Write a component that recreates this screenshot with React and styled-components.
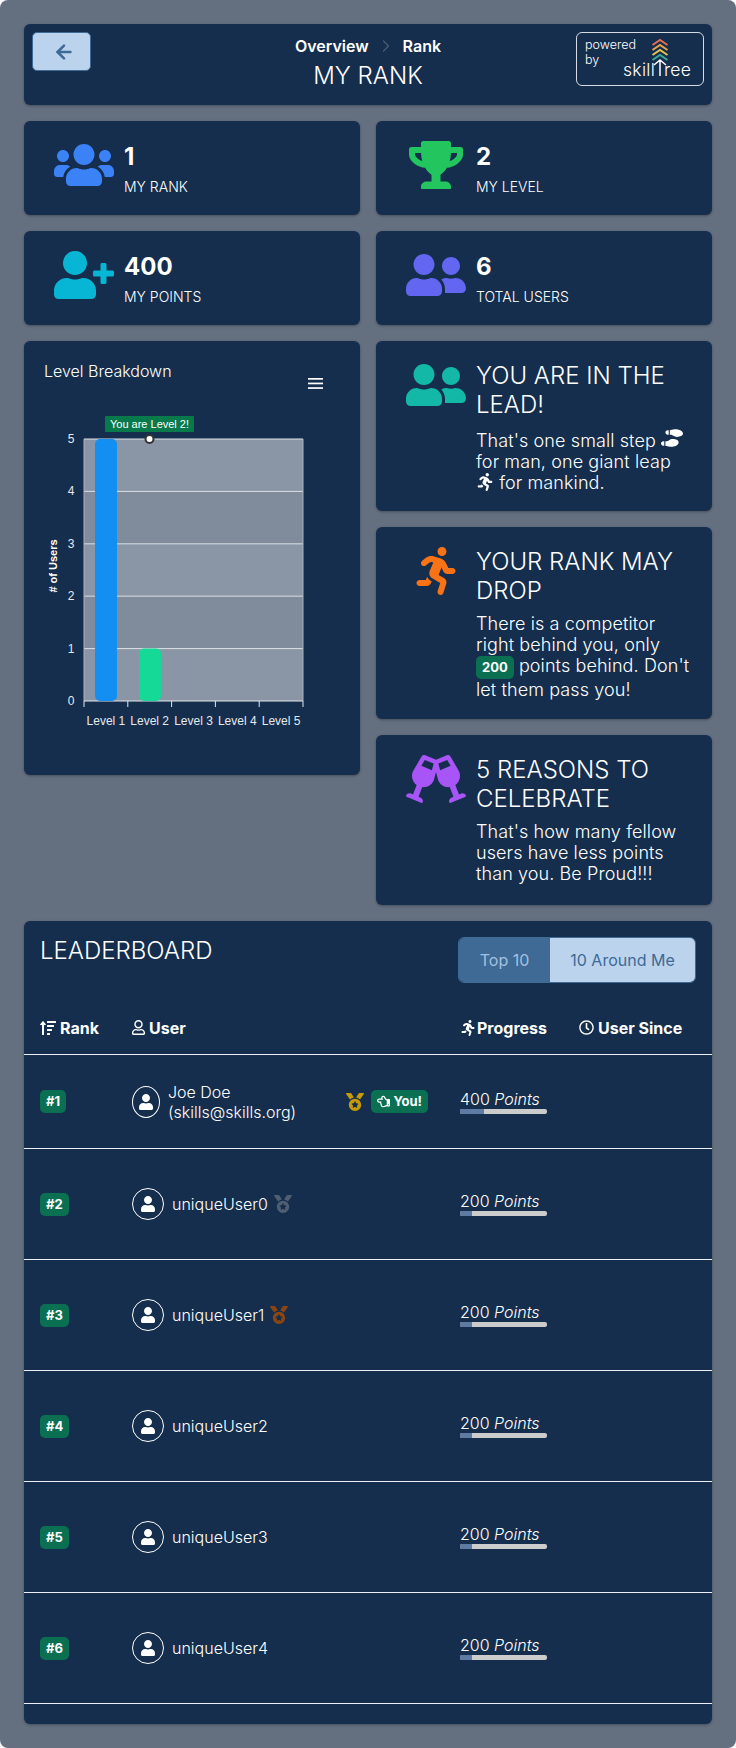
import React from 'react';
import styled, { createGlobalStyle } from 'styled-components';
import { ArrowLeft, ChevronRight } from 'lucide-react';
import {
  FaUsers,
  FaTrophy,
  FaUserPlus,
  FaUserFriends,
  FaRunning,
  FaGlassCheers,
  FaShoePrints,
  FaSortAmountUp,
  FaRegUser,
  FaRegClock,
  FaUser,
  FaMedal,
  FaRegHandPointLeft,
} from 'react-icons/fa';

const GlobalStyle = createGlobalStyle`
  html, body {
    margin: 0;
    padding: 0;
    background: #fff;
  }
  body {
    font-family: Inter, "Liberation Sans", sans-serif;
    color: #fff;
  }
`;

const NAVY = '#152e4d';
const GREEN = '#0b7052';

//   Page
const Page = styled.div`
  box-sizing: border-box;
  width: 736px;
  height: 1748px;
  padding: 24px;
  background: #647080;
  border-radius: 8px;
  display: flex;
  flex-direction: column;
  gap: 16px;
`;

const Card = styled.section`
  background: ${NAVY};
  border-radius: 6px;
  box-shadow: 0 1px 3px rgba(0, 0, 0, 0.3);
`;

//   Header
const Header = styled(Card)`
  height: 81px;
  box-sizing: border-box;
  padding: 8px;
  display: grid;
  grid-template-columns: 1fr auto 1fr;
`;

const BackButton = styled.button`
  width: 59px;
  height: 39px;
  border: 1px solid #3e6a95;
  border-radius: 5px;
  background: #bcd3ee;
  color: #3e6a95;
  display: flex;
  align-items: center;
  justify-content: center;
  padding: 0 0 0 5px;
`;

const HeaderMiddle = styled.div`
  display: flex;
  flex-direction: column;
  align-items: center;
`;

const Crumbs = styled.div`
  display: flex;
  align-items: center;
  gap: 7px;
  height: 28px;
  font-size: 16px;
  font-weight: 600;
  svg {
    color: #4a5c74;
  }
`;

const PageTitle = styled.h1`
  margin: 2px 0 0;
  font-size: 24px;
  font-weight: 300;
  line-height: 28px;
`;

const PoweredBy = styled.div`
  justify-self: end;
  box-sizing: border-box;
  width: 128px;
  height: 54px;
  border: 1px solid #d5dbe3;
  border-radius: 6px;
  position: relative;
`;

const PoweredText = styled.div`
  position: absolute;
  left: 8px;
  top: 4px;
  font-size: 12.5px;
  font-weight: 300;
  line-height: 15px;
  width: 60px;
`;

const LogoWord = styled.div`
  position: absolute;
  left: 46px;
  top: 24px;
  font-size: 17.5px;
  font-weight: 300;
  line-height: 26px;
  letter-spacing: 0.3px;
  display: flex;
  white-space: nowrap;
`;

const LogoTail = styled.span`
  margin-left: 9px;
`;

const LogoMark = styled.svg`
  position: absolute;
  left: 74px;
  top: 5px;
`;

//   Grids
const TwoCols = styled.div`
  display: grid;
  grid-template-columns: 336px 336px;
  gap: 16px;
`;

const Stack = styled.div`
  display: flex;
  flex-direction: column;
  gap: 16px;
`;

const StatCard = styled(Card)`
  height: 94px;
  box-sizing: border-box;
  padding: 20px 30px 0;
  display: flex;
  gap: 10px;
`;

const IconBox = styled.div`
  flex: 0 0 60px;
  width: 60px;
  height: 48px;
  display: flex;
  align-items: center;
  justify-content: center;
  color: ${(p) => p.$color};
`;

const StatText = styled.div`
  display: flex;
  flex-direction: column;
`;

const StatNumber = styled.div`
  margin-top: 2px;
  font-size: 24px;
  font-weight: 700;
  line-height: 28px;
`;

const StatLabel = styled.div`
  margin-top: 7px;
  font-size: 14px;
  font-weight: 300;
  line-height: 18px;
`;

const MessageCard = styled(Card)`
  box-sizing: border-box;
  height: ${(p) => p.$height}px;
  padding: 20px 20px 0 30px;
  display: flex;
  gap: 10px;
`;

const MessageBody = styled.div`
  flex: 1;
`;

const MessageTitle = styled.h2`
  margin: 0;
  font-size: 24px;
  font-weight: 300;
  line-height: 29px;
`;

const MessageText = styled.p`
  margin: 8px 0 0;
  font-size: 18px;
  font-weight: 300;
  letter-spacing: 0.1px;
  line-height: 21px;
  svg {
    vertical-align: -2px;
  }
`;

const PointsTag = styled.span`
  display: inline-block;
  padding: 0 6px;
  height: 23px;
  line-height: 23px;
  background: ${GREEN};
  border-radius: 5px;
  font-size: 13px;
  font-weight: 700;
  letter-spacing: 0;
  color: #fff;
`;

//   Chart
const ChartCard = styled(Card)`
  height: 434px;
  position: relative;
`;

const ChartTitle = styled.h3`
  margin: 0;
  padding: 19px 20px 0;
  font-size: 16px;
  font-weight: 300;
  line-height: 22px;
`;

const MenuIcon = styled.svg`
  position: absolute;
  left: 284px;
  top: 37px;
`;

const ChartSvg = styled.svg`
  display: block;
  margin-top: 18px;
  font-family: "Liberation Sans", Arial, sans-serif;
`;

//   Leaderboard
const Board = styled(Card)`
  flex: 1;
  display: flex;
  flex-direction: column;
`;

const BoardTop = styled.div`
  height: 82px;
  box-sizing: border-box;
  padding: 16px 16px 0;
  display: flex;
  justify-content: space-between;
  align-items: flex-start;
`;

const BoardTitle = styled.h2`
  margin: 0;
  font-size: 24px;
  font-weight: 300;
  line-height: 28px;
`;

const Toggle = styled.div`
  display: flex;
  height: 46px;
  border-radius: 6px;
  overflow: hidden;
  border: 1px solid #3e6a95;
  box-sizing: border-box;
`;

const ToggleOption = styled.div`
  display: flex;
  align-items: center;
  justify-content: center;
  width: ${(p) => p.$width}px;
  font-size: 16px;
  background: ${(p) => (p.$active ? '#3e6a95' : '#bcd3ee')};
  color: ${(p) => (p.$active ? '#a3c0e0' : '#3e6a95')};
`;

const rowCols = `
  display: grid;
  grid-template-columns: 91px 329px 119px 1fr;
  padding-left: 16px;
  align-items: center;
`;

const HeadRow = styled.div`
  ${rowCols}
  height: 52px;
  box-sizing: border-box;
  padding-bottom: 2px;
  font-size: 16px;
  font-weight: 700;
  border-bottom: 1px solid #eef1f5;
`;

const HeadCell = styled.div`
  display: flex;
  align-items: center;
  gap: ${(p) => p.$gap}px;
`;

const Row = styled.div`
  ${rowCols}
  height: ${(p) => p.$height}px;
  box-sizing: border-box;
  border-bottom: 1px solid #eef1f5;
`;

const RankTag = styled.span`
  justify-self: start;
  padding: 0 6px;
  height: 23px;
  line-height: 23px;
  background: ${GREEN};
  border-radius: 5px;
  font-size: 13px;
  font-weight: 700;
`;

const UserCell = styled.div`
  display: flex;
  align-items: center;
  gap: 8px;
  padding-left: 1px;
  font-size: 16px;
  font-weight: 300;
  line-height: 20px;
`;

const Avatar = styled.span`
  flex: 0 0 ${(p) => (p.$narrow ? 28 : 32)}px;
  height: 32px;
  box-sizing: border-box;
  border: 1px solid #fff;
  border-radius: 50%;
  display: flex;
  align-items: center;
  justify-content: center;
  font-size: 16px;
  color: #fff;
`;

const Medal = styled.span`
  display: flex;
  font-size: 18px;
  color: ${(p) => p.$color};
  margin-left: -2px;
`;

const RightGroup = styled.div`
  margin-left: auto;
  margin-right: 32px;
  display: flex;
  align-items: center;
  gap: 7px;
`;

const YouTag = styled(RankTag)`
  display: inline-flex;
  align-items: center;
  gap: 3px;
  color: #fff;
`;

const Progress = styled.div`
  width: 87px;
`;

const PointsLine = styled.div`
  font-size: 16px;
  font-weight: 300;
  line-height: 18px;
  em {
    font-style: italic;
  }
`;

const Bar = styled.div`
  height: 5px;
  border-radius: 2px;
  background: #cccccc;
  overflow: hidden;
  margin-top: 1px;
`;

const BarFill = styled.div`
  height: 100%;
  background: #5e7ba4;
`;

const stats = [
  [
    { icon: FaUsers, size: 60, color: '#3b82f6', value: '1', label: 'MY RANK' },
    { icon: FaTrophy, size: 54, color: '#22c55e', value: '2', label: 'MY LEVEL' },
  ],
  [
    { icon: FaUserPlus, size: 60, color: '#06b6d4', value: '400', label: 'MY POINTS' },
    { icon: FaUserFriends, size: 60, color: '#6366f1', value: '6', label: 'TOTAL USERS' },
  ],
];

const users = [
  { rank: 2, name: 'uniqueUser0', medal: '#4f5e72', height: 111 },
  { rank: 3, name: 'uniqueUser1', medal: '#8a4513', height: 111 },
  { rank: 4, name: 'uniqueUser2', height: 111 },
  { rank: 5, name: 'uniqueUser3', height: 111 },
  { rank: 6, name: 'uniqueUser4', height: 111 },
];

const Points = ({ value, percent }) => (
  <Progress>
    <PointsLine>
      {value} <em>Points</em>
    </PointsLine>
    <Bar>
      <BarFill style={{ width: `${percent}%` }} />
    </Bar>
  </Progress>
);

const LevelChart = () => {
  const left = 60;
  const right = 279;
  const top = 39;
  const bottom = 301;
  const step = (bottom - top) / 5;
  const colWidth = (right - left) / 5;
  return (
    <ChartSvg width="336" height="340" viewBox="0 0 336 340">
      {[0, 1, 2, 3, 4].map((i) => (
        <rect
          key={i}
          x={left}
          y={top + i * step}
          width={right - left}
          height={step}
          fill={i % 2 === 0 ? '#8a96a6' : '#808c9c'}
        />
      ))}
      {[0, 1, 2, 3, 4].map((i) => (
        <line key={i} x1={left} x2={right} y1={top + i * step} y2={top + i * step} stroke="#dfe3e8" strokeWidth="1" />
      ))}
      <line x1={left} x2={left} y1={top} y2={bottom} stroke="#a9b2be" />
      <line x1={right} x2={right} y1={top} y2={bottom} stroke="#a9b2be" />
      <line x1={left} x2={right} y1={bottom} y2={bottom} stroke="#e4e7eb" />
      <rect x="71" y={top} width="22" height={bottom - top} rx="5" fill="#138ff2" />
      <rect x="115" y={bottom - step} width="22" height={step} rx="5" fill="#14d997" />
      {[0, 1, 2, 3, 4, 5].map((i) => (
        <g key={i}>
          <line x1={left + i * colWidth} x2={left + i * colWidth} y1={bottom} y2={bottom + 6} stroke="#e4e7eb" />
          <text x="47" y={bottom - i * step + 4} fontSize="12" fill="#e6e9ee" textAnchor="middle">
            {i}
          </text>
        </g>
      ))}
      {[1, 2, 3, 4, 5].map((l) => (
        <text key={l} x={left + (l - 0.5) * colWidth} y="325" fontSize="12" fill="#e6e9ee" textAnchor="middle">
          Level {l}
        </text>
      ))}
      <text
        transform="translate(33 166) rotate(-90)"
        fontSize="11"
        fontWeight="700"
        fill="#fff"
        textAnchor="middle"
      >
        # of Users
      </text>
      <rect x="81" y="16" width="89" height="16" rx="1" fill="#067a4b" />
      <text x="125.5" y="28" fontSize="11" fill="#fff" textAnchor="middle">
        You are Level 2!
      </text>
      <circle cx="125.5" cy={top} r="4" fill="#fff" stroke="#333" strokeWidth="2" />
    </ChartSvg>
  );
};

const App = () => (
  <>
    <GlobalStyle />
    <Page>
      <Header>
        <BackButton>
          <ArrowLeft size={22} strokeWidth={2.8} />
        </BackButton>
        <HeaderMiddle>
          <Crumbs>
            <span>Overview</span>
            <ChevronRight size={20} strokeWidth={1.5} />
            <span>Rank</span>
          </Crumbs>
          <PageTitle>MY RANK</PageTitle>
        </HeaderMiddle>
        <PoweredBy>
          <PoweredText>
            powered
            <br />
            by
          </PoweredText>
          <LogoMark width="18" height="40" viewBox="0 0 18 40" fill="none" strokeWidth="2">
            <path d="M1.5 7l7.5-5 7.5 5" stroke="#e2714d" />
            <path d="M1.5 12l7.5-5 7.5 5" stroke="#e9a24b" />
            <path d="M1.5 17l7.5-5 7.5 5" stroke="#e8c34f" />
            <path d="M1.5 22l7.5-5 7.5 5" stroke="#3fa795" />
            <path d="M3 27l6-5 6 5M9 22v16" stroke="#fff" strokeWidth="1.5" />
          </LogoMark>
          <LogoWord>
            <span>skill</span>
            <LogoTail>ree</LogoTail>
          </LogoWord>
        </PoweredBy>
      </Header>

      {stats.map((row) => (
        <TwoCols key={row[0].label}>
          {row.map(({ icon: Icon, size, color, value, label }) => (
            <StatCard key={label}>
              <IconBox $color={color}>
                <Icon size={size} />
              </IconBox>
              <StatText>
                <StatNumber>{value}</StatNumber>
                <StatLabel>{label}</StatLabel>
              </StatText>
            </StatCard>
          ))}
        </TwoCols>
      ))}

      <TwoCols>
        <ChartCard>
          <ChartTitle>Level Breakdown</ChartTitle>
          <MenuIcon width="15" height="11" viewBox="0 0 15 11" fill="#fff">
            <rect y="0" width="15" height="1.7" />
            <rect y="4.6" width="15" height="1.7" />
            <rect y="9.2" width="15" height="1.7" />
          </MenuIcon>
          <LevelChart />
        </ChartCard>
        <Stack>
          <MessageCard $height={170}>
            <IconBox $color="#14b8a6">
              <FaUserFriends size={60} />
            </IconBox>
            <MessageBody>
              <MessageTitle>YOU ARE IN THE LEAD!</MessageTitle>
              <MessageText>
                That's one small step <FaShoePrints size={22} /> for man, one giant leap{' '}
                <FaRunning size={18} /> for mankind.
              </MessageText>
            </MessageBody>
          </MessageCard>
          <MessageCard $height={192}>
            <IconBox $color="#f97316">
              <FaRunning size={48} />
            </IconBox>
            <MessageBody>
              <MessageTitle>YOUR RANK MAY DROP</MessageTitle>
              <MessageText>
                There is a competitor right behind you, only <PointsTag>200</PointsTag> points behind.
                Don't let them pass you!
              </MessageText>
            </MessageBody>
          </MessageCard>
          <MessageCard $height={170}>
            <IconBox $color="#a855f7">
              <FaGlassCheers size={60} />
            </IconBox>
            <MessageBody>
              <MessageTitle>5 REASONS TO CELEBRATE</MessageTitle>
              <MessageText>
                That's how many fellow users have less points than you. Be Proud!!!
              </MessageText>
            </MessageBody>
          </MessageCard>
        </Stack>
      </TwoCols>

      <Board>
        <BoardTop>
          <BoardTitle>LEADERBOARD</BoardTitle>
          <Toggle>
            <ToggleOption $active $width={91}>
              Top 10
            </ToggleOption>
            <ToggleOption $width={145}>10 Around Me</ToggleOption>
          </Toggle>
        </BoardTop>
        <HeadRow>
          <HeadCell $gap={4}>
            <FaSortAmountUp size={16} /> Rank
          </HeadCell>
          <HeadCell $gap={3}>
            <FaRegUser size={15} /> User
          </HeadCell>
          <HeadCell $gap={1}>
            <FaRunning size={16} /> Progress
          </HeadCell>
          <HeadCell $gap={4}>
            <FaRegClock size={15} /> User Since
          </HeadCell>
        </HeadRow>
        <Row $height={94}>
          <RankTag>#1</RankTag>
          <UserCell>
            <Avatar $narrow>
              <FaUser />
            </Avatar>
            <span>
              Joe Doe
              <br />
              (skills@skills.org)
            </span>
            <RightGroup>
              <Medal $color="#c79a06">
                <FaMedal />
              </Medal>
              <YouTag>
                <FaRegHandPointLeft size={13} /> You!
              </YouTag>
            </RightGroup>
          </UserCell>
          <Points value={400} percent={28} />
          <div />
        </Row>
        {users.map((u) => (
          <Row key={u.rank} $height={u.height}>
            <RankTag>#{u.rank}</RankTag>
            <UserCell>
              <Avatar>
                <FaUser />
              </Avatar>
              <span>{u.name}</span>
              {u.medal && (
                <Medal $color={u.medal}>
                  <FaMedal />
                </Medal>
              )}
            </UserCell>
            <Points value={200} percent={14} />
            <div />
          </Row>
        ))}
      </Board>
    </Page>
  </>
);

export default App;
